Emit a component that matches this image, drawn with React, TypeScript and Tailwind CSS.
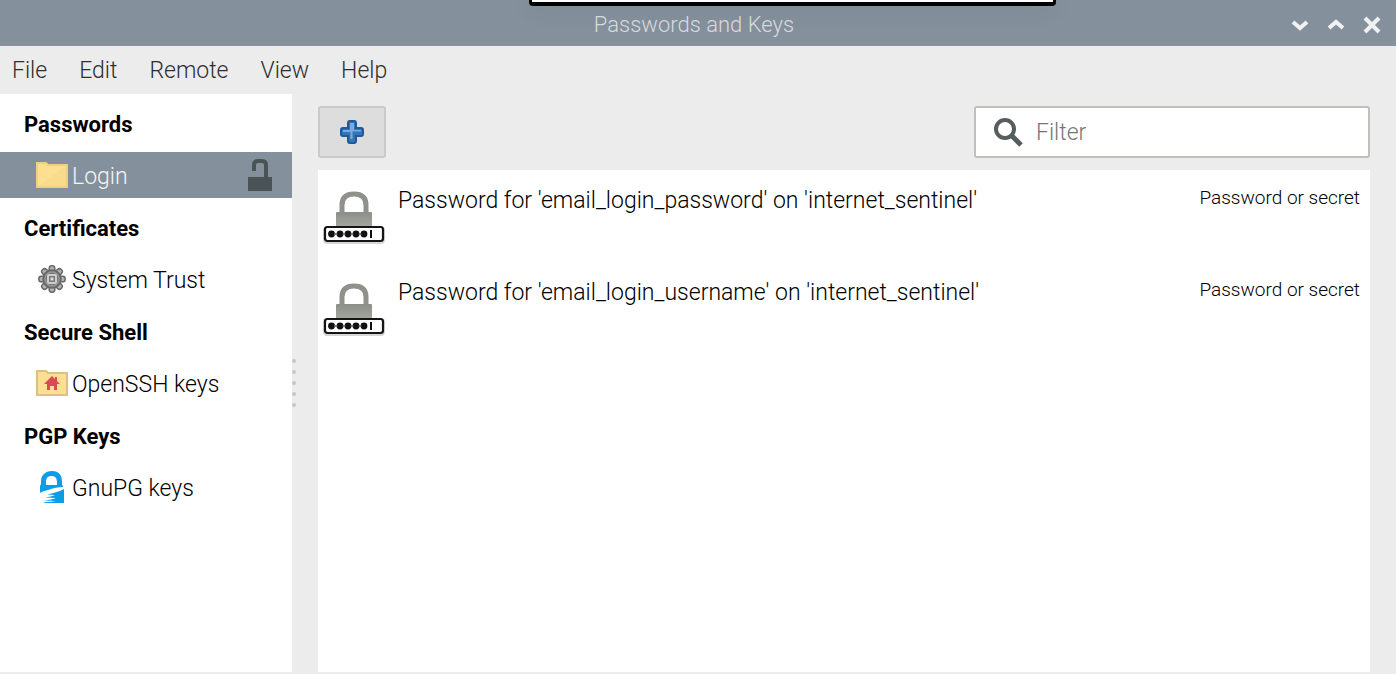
import React from "react";

type SidebarGroup = {
  title: string;
  item: string;
  icon: React.ReactNode;
  selected?: boolean;
};

function FolderIcon({ home = false }: { home?: boolean }) {
  return (
    <svg width="32" height="26" viewBox="0 0 32 26" aria-hidden="true">
      <path d="M1 1H10L12 3H31V25H1Z" fill="#fddf92" stroke={home ? "#d9c08a" : "#f0cf85"} strokeWidth="2" />
      {!home && <path d="M2 24L30 4V24Z" fill="#f9d888" opacity=".6" />}
      {home && <path d="M16 6L19 9V7H21V11L24 14H21V20H18V16H14V20H11V14H8Z" fill="#dc4a58" />}
    </svg>
  );
}

function GearIcon() {
  const angles = [0, 45, 90, 135, 180, 225, 270, 315];
  return (
    <svg width="28" height="28" viewBox="0 0 28 28" aria-hidden="true">
      {angles.map((a) => (
        <g key={a} transform={`rotate(${a} 14 14)`}>
          <rect x="11.2" y="0.8" width="5.6" height="7" rx="2.6" fill="#b4b4b4" stroke="#686868" strokeWidth="1.500" />
        </g>
      ))}
      <circle cx="14" cy="14" r="9" fill="#747474" stroke="#666" strokeWidth="1.500" />
      <circle cx="14" cy="14" r="7" fill="none" stroke="#979797" strokeWidth="1.500" />
      <rect x="10" y="10" width="8" height="8" rx="1" fill="#777" stroke="#cfcfcf" strokeWidth="2" />
      <rect x="12.500" y="12.500" width="3" height="3" fill="#dcdcdc" />
    </svg>
  );
}

function GnuPgIcon() {
  return (
    <svg width="26" height="32" viewBox="0 0 26 32" aria-hidden="true">
      <path
        d="M2 13V11C2 4 6 0 13 0S23 4 23 11V14L24 15V16C20 16 14 17 9 19C5 20 2 21 1 22V15ZM7 14H18V11C18 7 16 5 12.500 5S7 7 7 11Z"
        fill="#0c9ce8"
        fillRule="evenodd"
      />
      <path
        d="M25 18V32H5L6 31C11 31 15 30.500 17 30L5 29.500C10 29 15 28 17 27L6 26.500C10 26 14 25 16 24L8 23.500C14 22 20 21 25 18Z"
        fill="#0c9ce8"
      />
    </svg>
  );
}

function UnlockIcon() {
  return (
    <svg width="24" height="32" viewBox="0 0 24 32" aria-hidden="true">
      <path d="M6 12V6Q6 2 10 2H14Q18 2 18 6V19" fill="none" stroke="#4a5355" strokeWidth="4" />
      <rect y="18" width="24" height="14" fill="#4a5355" />
    </svg>
  );
}

function PasswordIcon() {
  return (
    <svg width="64" height="56" viewBox="0 0 64 56" aria-hidden="true">
      <defs>
        <linearGradient id="metal" x1="0" y1="0" x2="0" y2="1">
          <stop offset="0" stopColor="#8c8f87" />
          <stop offset="1" stopColor="#a3a69e" />
        </linearGradient>
      </defs>
      <path d="M20 23V15Q20 4 32 4T44 15V23" fill="none" stroke="#8f928b" strokeWidth="5" />
      <rect x="14" y="22" width="36" height="15" rx="1" fill="url(#metal)" />
      <rect x="1" y="36" width="62" height="18" rx="4" fill="#bbb" opacity=".6" />
      <rect x="3" y="37" width="58" height="14" rx="2.500" fill="#fff" stroke="#151515" strokeWidth="2.200" />
      {[9.5, 18, 26, 34, 42].map((x) => (
        <circle key={x} cx={x} cy="44" r="3.400" fill="#111" />
      ))}
      <path d="M9 44H42" stroke="#777" strokeWidth="2" />
      {[9.5, 18, 26, 34, 42].map((x) => (
        <circle key={x} cx={x} cy="44" r="2.800" fill="#111" />
      ))}
      <path d="M49 40V48" stroke="#111" strokeWidth="2" />
    </svg>
  );
}

function PlusIcon() {
  return (
    <svg width="26" height="26" viewBox="0 0 26 26" aria-hidden="true">
      <path
        d="M11 2H15Q17 2 17 4V9H22Q24 9 24 11V15Q24 17 22 17H17V22Q17 24 15 24H11Q9 24 9 22V17H4Q2 17 2 15V11Q2 9 4 9H9V4Q9 2 11 2Z"
        fill="#3474b8"
        stroke="#1d599f"
        strokeWidth="2"
      />
      <path d="M4 13V11H11V4H15V11H22V12.500H13.500V20H11.500V13Z" fill="#7dabd9" />
    </svg>
  );
}

const groups: SidebarGroup[] = [
  { title: "Passwords", item: "Login", icon: <FolderIcon />, selected: true },
  { title: "Certificates", item: "System Trust", icon: <GearIcon /> },
  { title: "Secure Shell", item: "OpenSSH keys", icon: <FolderIcon home /> },
  { title: "PGP Keys", item: "GnuPG keys", icon: <GnuPgIcon /> },
];

const secrets = [
  "Password for 'email_login_password' on 'internet_sentinel'",
  "Password for 'email_login_username' on 'internet_sentinel'",
];

const windowButtons = [
  { label: "Minimize", path: "M5 9L12 15L19 9" },
  { label: "Maximize", path: "M5 15L12 9L19 15" },
  { label: "Close", path: "M5 5L19 19M19 5L5 19" },
];

export default function App() {
  return (
    <div className="relative flex min-h-screen flex-col overflow-hidden bg-[#ececec] font-[Roboto,sans-serif] text-[23px] leading-7 font-light text-black">
      <div className="absolute top-0 left-[529px] h-[6px] w-[527px] rounded-b-sm border-x-3 border-b-4 border-black bg-white shadow-[0_2px_24px_rgba(0,0,0,0.12)]" />

      <header className="grid h-[46px] grid-cols-[1fr_auto_1fr] items-center border-b border-[#8995a0] bg-[#84909b] px-3">
        <h1 className="col-start-2 pt-1 pr-2 text-[22px] text-[#d8dce0]">Passwords and Keys</h1>
        <div className="flex justify-end gap-3 pt-1">
          {windowButtons.map((b) => (
            <button key={b.label} aria-label={b.label} className="flex size-6 items-center justify-center">
              <svg width="24" height="24" viewBox="0 0 24 24" fill="none" stroke="#f0f1f2" strokeWidth="4" aria-hidden="true">
                <path d={b.path} />
              </svg>
            </button>
          ))}
        </div>
      </header>

      <nav className="flex h-12 items-center gap-8 px-3 pt-[2px] text-[#2e2e2e]">
        {["File", "Edit", "Remote", "View", "Help"].map((m) => (
          <button key={m}>{m}</button>
        ))}
      </nav>

      <div className="flex flex-1 pb-[2px]">
        <aside className="w-[292px] shrink-0 bg-white">
          {groups.map((g) => (
            <section key={g.title}>
              <h2 className="flex h-[58px] items-center pt-1 pl-6 text-[22px] font-bold">{g.title}</h2>
              <button
                className={`flex h-[46px] w-full items-center gap-1 pr-5 pl-9 ${g.selected ? "bg-[#84909b] text-[#f4f5f6]" : ""}`}
              >
                <span className="flex w-8 shrink-0 justify-center">{g.icon}</span>
                <span className="flex-1 pt-1 text-left">{g.item}</span>
                {g.selected && <UnlockIcon />}
              </button>
            </section>
          ))}
        </aside>

        <div className="flex w-[26px] shrink-0 items-center" aria-hidden="true">
          <svg width="4" height="48" viewBox="0 0 4 48">
            {[2, 13, 24, 35, 46].map((y) => (
              <circle key={y} cx="2" cy={y} r="2" fill="#c8c8c6" />
            ))}
          </svg>
        </div>

        <main className="flex min-w-0 flex-1 flex-col pr-[26px]">
          <div className="flex h-[76px] items-center justify-between">
            <button
              aria-label="Add"
              className="flex h-[52px] w-[68px] items-center justify-center rounded-[3px] border-2 border-[#cacaca] bg-[#dddddd]"
            >
              <PlusIcon />
            </button>
            <label className="flex h-[52px] w-[396px] items-center gap-3 rounded-[3px] border-2 border-[#bfbfbb] bg-white px-4">
              <svg width="32" height="32" viewBox="0 0 32 32" fill="none" stroke="#555d5f" strokeWidth="4" aria-hidden="true">
                <circle cx="13" cy="13" r="9" />
                <path d="M19 19L29 29" strokeWidth="5" />
              </svg>
              <input
                type="text"
                aria-label="Filter"
                placeholder="Filter"
                className="min-w-0 flex-1 pt-[2px] outline-none placeholder:text-[#747778]"
              />
            </label>
          </div>
          <ul className="flex-1 bg-white">
            {secrets.map((s) => (
              <li key={s} className="flex h-[92px] items-start pt-4 pr-[10px] pl-1">
                <span className="mt-1 mr-3 shrink-0">
                  <PasswordIcon />
                </span>
                <span className="flex-1 pt-px">{s}</span>
                <span className="text-[19px] leading-6">Password or secret</span>
              </li>
            ))}
          </ul>
        </main>
      </div>
    </div>
  );
}
